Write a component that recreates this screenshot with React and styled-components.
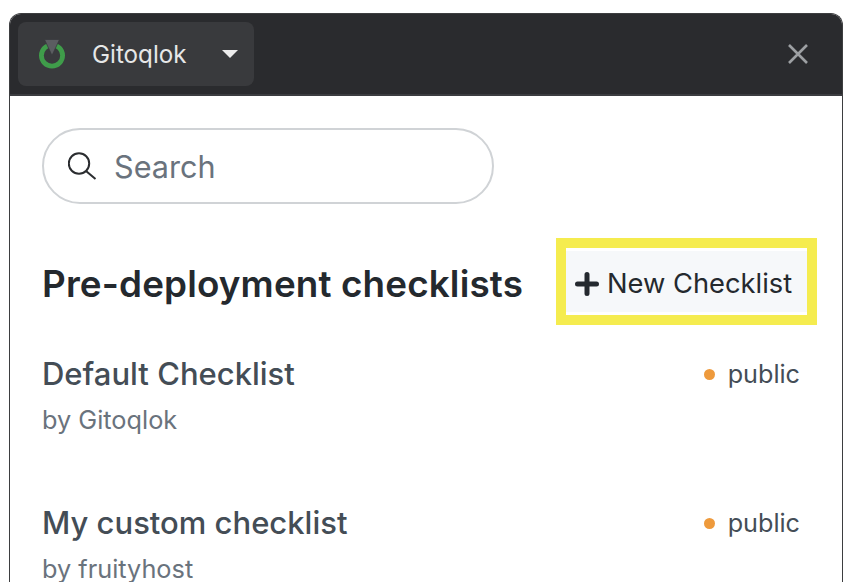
import React from "react";
import styled, { createGlobalStyle } from "styled-components";

const GlobalStyle = createGlobalStyle`
  html, body {
    margin: 0;
    height: 582px;
    overflow: hidden;
    background: #fff;
    font-family: Inter, "Liberation Sans", sans-serif;
  }
  * { box-sizing: border-box; }
`;

const checklists = [
  { id: 1, title: "Default Checklist", author: "Gitoqlok", visibility: "public" },
  { id: 2, title: "My custom checklist", author: "fruityhost", visibility: "public" },
];

export default function App() {
  return (
    <Page>
      <GlobalStyle />
      <Window>
        <TopBar>
          <Switcher>
            <svg width="30" height="30" viewBox="0 0 30 30">
              <circle cx="15" cy="16.5" r="10.6" fill="none" stroke="#3f9c4a" strokeWidth="4.8" />
              <path d="M7.5 0.5h15l-7.5 16z" fill="#5b5d61" stroke="#393a3d" strokeWidth="0.8" />
            </svg>
            <SwitcherLabel>Gitoqlok</SwitcherLabel>
            <Caret />
          </Switcher>
          <CloseIcon width="22" height="22" viewBox="0 0 22 22">
            <path d="M2 2l18 18M20 2L2 20" stroke="#9da0a3" strokeWidth="2.6" fill="none" />
          </CloseIcon>
        </TopBar>
        <Content>
          <SearchBox>
            <svg width="30" height="30" viewBox="0 0 30 30">
              <circle cx="11" cy="12.5" r="10.2" fill="none" stroke="#2b2d30" strokeWidth="2" />
              <path d="M18 20l9.5 8" stroke="#2b2d30" strokeWidth="2" fill="none" />
            </svg>
            <SearchText>Search</SearchText>
          </SearchBox>
          <HeadingRow>
            <Heading>Pre-deployment checklists</Heading>
            <Highlight>
              <NewButton>
                <svg width="24" height="24" viewBox="0 0 24 24">
                  <path d="M12 2.5v19M2.5 12h19" stroke="#24292f" strokeWidth="5" strokeLinecap="round" fill="none" />
                </svg>
                New Checklist
              </NewButton>
            </Highlight>
          </HeadingRow>
          <List>
            {checklists.map((item) => (
              <Row key={item.id}>
                <div>
                  <Title>{item.title}</Title>
                  <Author>by {item.author}</Author>
                </div>
                <Visibility>
                  <Dot />
                  {item.visibility}
                </Visibility>
              </Row>
            ))}
          </List>
        </Content>
      </Window>
    </Page>
  );
}

const Page = styled.div`
  padding: 13px 11px 0 9px;
`;

const Window = styled.div`
  height: 569px;
  border: 1px solid #3d3e40;
  border-bottom: 0;
  border-radius: 12px 12px 0 0;
  overflow: hidden;
  background: #fff;
`;

const TopBar = styled.header`
  height: 82px;
  padding: 8px 33px 8px 8px;
  display: flex;
  align-items: center;
  justify-content: space-between;
  background: #2a2b2e;
  border-bottom: 2px solid #3b3c40;
`;

const Switcher = styled.div`
  width: 236px;
  height: 64px;
  padding: 0 16px 0 19px;
  display: flex;
  align-items: center;
  background: #393a3d;
  border-radius: 8px;
`;

const SwitcherLabel = styled.span`
  margin-left: 25px;
  padding-top: 1px;
  flex: 1;
  color: #e6e7e8;
  font-size: 24.2px;
  line-height: 30px;
`;

const Caret = styled.span`
  width: 0;
  height: 0;
  border-left: 8px solid transparent;
  border-right: 8px solid transparent;
  border-top: 8px solid #ececec;
`;

const CloseIcon = styled.svg`
  display: block;
`;

const Content = styled.main`
  padding: 32px 25px 0 32px;
`;

const SearchBox = styled.div`
  width: 452px;
  height: 76px;
  padding: 0 24px;
  display: flex;
  align-items: center;
  gap: 16px;
  border: 2px solid #d0d3d6;
  border-radius: 38px;
`;

const SearchText = styled.span`
  padding-top: 1px;
  color: #6a737d;
  font-size: 30.6px;
  line-height: 40px;
`;

const HeadingRow = styled.div`
  margin-top: 34px;
  display: flex;
  align-items: center;
  justify-content: space-between;
`;

const Heading = styled.h1`
  margin: 0;
  padding-top: 4px;
  color: #24292e;
  font-size: 36.8px;
  line-height: 44px;
  font-weight: 600;
  letter-spacing: 0.15px;
`;

const Highlight = styled.div`
  width: 261px;
  height: 87px;
  border: 10px solid #f5ec4f;
  background: #fff;
  padding: 3px 0;
`;

const NewButton = styled.button`
  width: 100%;
  height: 100%;
  padding: 4px 0 0 9px;
  display: flex;
  align-items: center;
  gap: 8px;
  border: 0;
  background: #f6f8fa;
  color: #24292e;
  font-family: inherit;
  font-size: 27.3px;
  line-height: 34px;
  white-space: nowrap;
`;

const List = styled.div`
  padding-right: 17px;
  margin-top: 6px;
`;

const Row = styled.div`
  height: 149px;
  padding-top: 23px;
  display: flex;
  justify-content: space-between;
  align-items: flex-start;
`;

const Title = styled.div`
  color: #444d56;
  font-size: 31px;
  line-height: 40px;
  font-weight: 500;
`;

const Author = styled.div`
  margin-top: 10px;
  color: #6a737d;
  font-size: 25.3px;
  line-height: 32px;
`;

const Visibility = styled.div`
  display: flex;
  align-items: center;
  gap: 12.5px;
  color: #444d56;
  font-size: 25.2px;
  line-height: 32px;
  padding-top: 4px;
`;

const Dot = styled.span`
  width: 11px;
  height: 11px;
  border-radius: 50%;
  background: #ee9a3c;
`;
